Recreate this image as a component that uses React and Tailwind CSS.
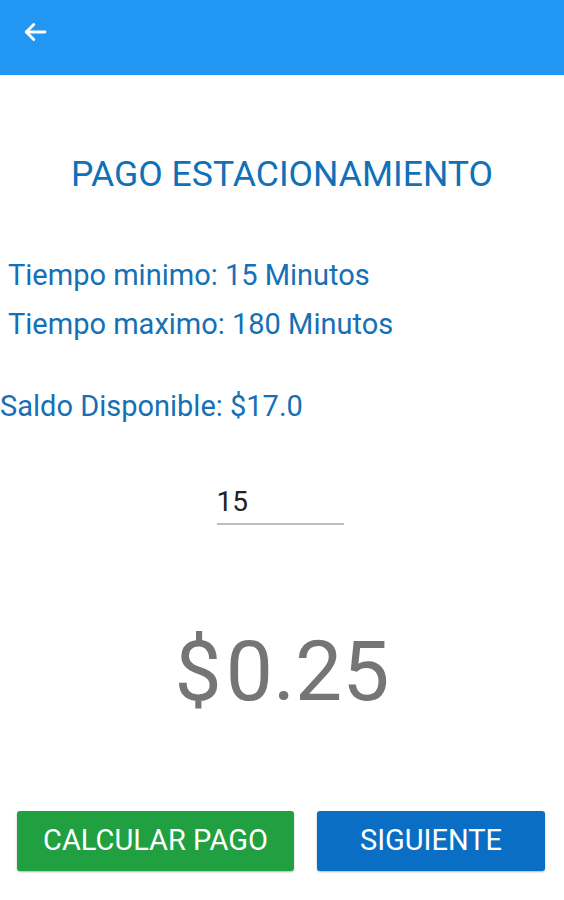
import React from "react";

export default function App() {
  return (
    <div className="w-[564px] h-[900px] bg-white flex flex-col" style={{ fontFamily: "Roboto, 'Liberation Sans', sans-serif" }}>
      <div className="h-[75px] bg-[#2196f3] flex items-center pl-[20px] shrink-0">
        <svg width="30" height="30" viewBox="0 0 24 24" fill="none" stroke="white" strokeWidth="2.3" strokeLinecap="round" strokeLinejoin="round" className="-mt-[12px]">
          <path d="M20 12H5" />
          <path d="M11 6l-6 6 6 6" />
        </svg>
      </div>
      <div className="flex flex-col flex-1">
        <div className="mt-[77px] text-center text-[35.6px] leading-[44px] text-[#1070b8]">PAGO ESTACIONAMIENTO</div>
        <div className="mt-[58px] pl-[8px] flex flex-col gap-[6px] text-[29px] leading-[43px] text-[#1570b5]">
          <div>Tiempo minimo: 15 Minutos</div>
          <div>Tiempo maximo: 180 Minutos</div>
        </div>
        <div className="mt-[39px] text-[29px] leading-[43px] text-[#1570b5]">Saldo Disponible: $17.0</div>
        <div className="mt-[57px] flex justify-center">
          <div className="w-[127px] ml-[-4px] border-b-[2px] border-[#bdbdbd] text-[28px] leading-[34px] text-[#212121] pb-[4px]">15</div>
        </div>
        <div className="mt-[102px] flex justify-center text-[84px] leading-[90px] text-[#757575]">
          <span className="mr-[4px]">$</span>0.25
        </div>
        <div className="mt-[94px] flex px-[17px] gap-[23px]">
          <button className="w-[277px] h-[60px] bg-[#20a040] rounded-[3px] text-white text-[29px] font-normal shadow-[0_1px_2px_rgba(0,0,0,0.3)]">CALCULAR PAGO</button>
          <button className="w-[228px] h-[60px] bg-[#0a6fc4] rounded-[3px] text-white text-[29px] font-normal shadow-[0_1px_2px_rgba(0,0,0,0.3)]">SIGUIENTE</button>
        </div>
      </div>
    </div>
  );
}
